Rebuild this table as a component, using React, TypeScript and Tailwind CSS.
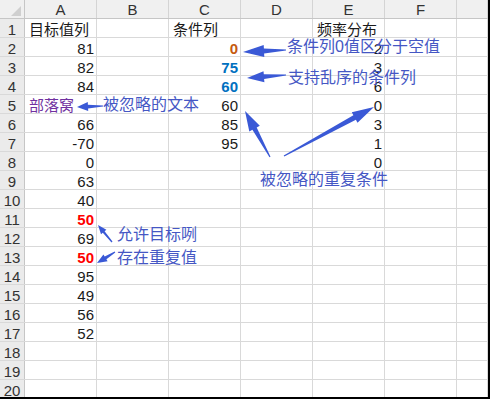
import type { ReactNode } from "react";

type Tone = "plain" | "red" | "orange" | "blue" | "purple";
type Cell = { v: string; left?: boolean; tone?: Tone };

const COLS = ["A", "B", "C", "D", "E", "F", ""];
const COL_W = ["w-[72px]", "w-[72px]", "w-[72px]", "w-[72px]", "w-[72px]", "w-[72px]", "flex-1"];

// row -> col index -> cell
const DATA: Record<number, Record<number, Cell>> = {
  1: { 0: { v: "目标值列", left: true }, 2: { v: "条件列", left: true }, 4: { v: "频率分布", left: true } },
  2: { 0: { v: "81" }, 2: { v: "0", tone: "orange" }, 4: { v: "2" } },
  3: { 0: { v: "82" }, 2: { v: "75", tone: "blue" }, 4: { v: "3" } },
  4: { 0: { v: "84" }, 2: { v: "60", tone: "blue" }, 4: { v: "6" } },
  5: { 0: { v: "部落窝", left: true, tone: "purple" }, 2: { v: "60" }, 4: { v: "0" } },
  6: { 0: { v: "66" }, 2: { v: "85" }, 4: { v: "3" } },
  7: { 0: { v: "-70" }, 2: { v: "95" }, 4: { v: "1" } },
  8: { 0: { v: "0" }, 4: { v: "0" } },
  9: { 0: { v: "63" } },
  10: { 0: { v: "40" } },
  11: { 0: { v: "50", tone: "red" } },
  12: { 0: { v: "69" } },
  13: { 0: { v: "50", tone: "red" } },
  14: { 0: { v: "95" } },
  15: { 0: { v: "49" } },
  16: { 0: { v: "56" } },
  17: { 0: { v: "52" } },
};

const TONE: Record<Tone, string> = {
  plain: "text-[#1a1a1a]",
  red: "text-[#ff0000] font-bold",
  orange: "text-[#c55a11] font-bold",
  blue: "text-[#0070c0] font-bold",
  purple: "text-[#7030a0]",
};

type Pt = [number, number];
function arrow(tail: Pt, tip: Pt, headLen: number, headW: number, shaftW: number) {
  const dx = tip[0] - tail[0];
  const dy = tip[1] - tail[1];
  const len = Math.hypot(dx, dy);
  const ux = dx / len, uy = dy / len;
  const nx = -uy, ny = ux;
  const bx = tip[0] - ux * headLen, by = tip[1] - uy * headLen;
  const p = (x: number, y: number) => `${x.toFixed(1)},${y.toFixed(1)}`;
  return [
    p(tail[0] + nx * 0.6, tail[1] + ny * 0.6),
    p(bx + nx * shaftW, by + ny * shaftW),
    p(bx + nx * headW, by + ny * headW),
    p(tip[0], tip[1]),
    p(bx - nx * headW, by - ny * headW),
    p(bx - nx * shaftW, by - ny * shaftW),
    p(tail[0] - nx * 0.6, tail[1] - ny * 0.6),
  ].join(" ");
}

const ARROWS = [
  arrow([286, 50], [243, 52], 21, 6, 2.6),
  arrow([286, 75], [247, 78], 17, 5.5, 2.4),
  arrow([103, 106], [77, 107], 11, 4.5, 1.8),
  arrow([270, 157], [245, 111], 20, 6, 2.4),
  arrow([284, 156], [374, 107], 22, 6, 2.6),
  arrow([112, 242], [98, 225], 9, 3.5, 1.2),
  arrow([115, 252], [97, 263], 10, 4, 1.6),
];

function Note({ className, children }: { className: string; children: ReactNode }) {
  return <div className={`absolute whitespace-nowrap text-[16px] leading-[18px] text-[#4557c4] ${className}`}>{children}</div>;
}

export default function App() {
  const rows = Array.from({ length: 20 }, (_, i) => i + 1);
  return (
    <div
      className="relative h-[399px] w-[490px] overflow-hidden border-b-2 border-r-2 border-black bg-white"
      style={{ fontFamily: '"Liberation Sans", "Noto Sans CJK SC", sans-serif' }}
    >
      {/* column header */}
      <div className="flex h-[19px] border-b border-[#c6c6c6] bg-[#f0f0f0]">
        <div className="relative w-[25px] shrink-0 border-r border-[#c6c6c6]">
          <div className="absolute bottom-[2px] right-[3px] h-0 w-0 border-b-[10px] border-l-[10px] border-b-[#cfcfcf] border-l-transparent" />
        </div>
        {COLS.map((c, i) => (
          <div key={i} className={`${COL_W[i]} shrink-0 border-r border-[#d4d4d4] text-center text-[15px] leading-[19px] text-[#333]`}>
            {c}
          </div>
        ))}
      </div>

      {rows.map((r) => (
        <div key={r} className="flex h-[19px] border-b border-[#d9d9d9]">
          <div className="flex w-[25px] shrink-0 items-end justify-center border-r border-[#c6c6c6] bg-[#ebebeb] text-[15px] leading-[15px] text-[#333]">
            {r}
          </div>
          {COLS.map((_, i) => {
            const cell = DATA[r]?.[i];
            return (
              <div
                key={i}
                className={`${COL_W[i]} flex shrink-0 items-end border-r border-[#d9d9d9] text-[15px] leading-[14px] ${
                  cell?.left ? "justify-start pl-[4px]" : "justify-end pr-[2px]"
                } ${TONE[cell?.tone ?? "plain"]}`}
              >
                {cell?.v}
              </div>
            );
          })}
        </div>
      ))}

      <svg className="pointer-events-none absolute left-0 top-0" width="490" height="399">
        {ARROWS.map((pts, i) => (
          <polygon key={i} points={pts} fill="#3a59d6" />
        ))}
      </svg>

      <Note className="left-[287px] top-[38px]">条件列0值区分于空值</Note>
      <Note className="left-[288px] top-[69px]">支持乱序的条件列</Note>
      <Note className="left-[103px] top-[96px]">被忽略的文本</Note>
      <Note className="left-[260px] top-[171px]">被忽略的重复条件</Note>
      <Note className="left-[117px] top-[226px]">允许目标咧</Note>
      <Note className="left-[117px] top-[249px]">存在重复值</Note>
    </div>
  );
}
